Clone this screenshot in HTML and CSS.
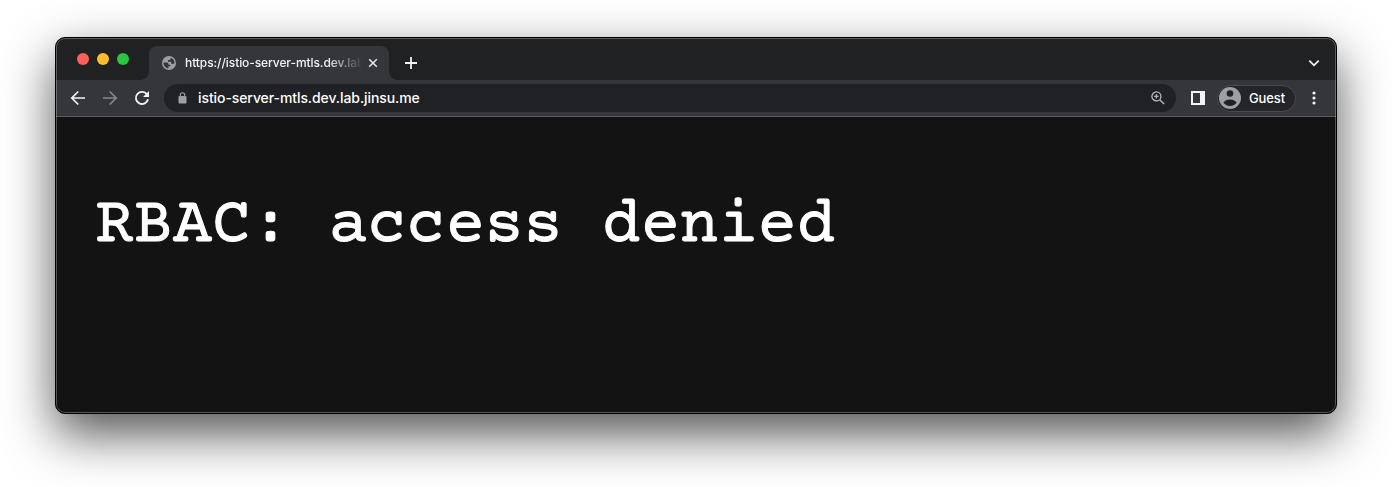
FILE: index.html
```
<!DOCTYPE html>
<html lang="en">
<head>
<meta charset="utf-8">
<title>istio-server-mtls.dev.lab.jinsu.me</title>
<link rel="stylesheet" href="styles.css">
</head>
<body>
<div class="window">
  <div class="tabstrip">
    <div class="lights"><i class="light red"></i><i class="light yellow"></i><i class="light green"></i></div>
    <div class="tab">
      <svg class="globe" viewBox="0 0 14 14"><circle cx="7" cy="7" r="7" fill="#9aa0a6"/><path d="M1.500 6.500h3.300c1 0 1.500.6 1.500 1.300 0 .7.500 1 1.200 1h.8v1.400H6.400v2.200C3.600 12.200 1.400 9.800 1.500 6.500zM8.600 1.700c2.400.7 4 2.900 3.900 5.400-.5.800-1.100 1-2 .9-.9-.1-1.300-.6-1.300-1.300 0-.6-.4-.9-1-.9H6V3.900h1.200c.9 0 1.400-.5 1.400-1.200z" fill="#35363a"/></svg>
      <span class="title">https://istio-server-mtls.dev.lab</span>
      <svg class="close" viewBox="0 0 10 10"><path d="M1.200 1.200 8.800 8.800M8.800 1.200 1.200 8.800" stroke="#e8eaed" stroke-width="1.500"/></svg>
    </div>
    <svg class="plus" viewBox="0 0 12 12"><path d="M6 0v12M0 6h12" stroke="#f1f3f4" stroke-width="1.800"/></svg>
    <svg class="chevron" viewBox="0 0 12 8"><path d="M1.300 1.700 6 6.300l4.700-4.600" fill="none" stroke="#f1f3f4" stroke-width="1.800"/></svg>
  </div>
  <div class="toolbar">
    <svg class="nav" viewBox="0 0 16 16"><path d="M15 8H2M8.300 1.500 1.800 8l6.500 6.500" fill="none" stroke="#f1f3f4" stroke-width="1.700"/></svg>
    <svg class="nav" viewBox="0 0 16 16"><path d="M1 8h13M7.700 1.500 14.200 8l-6.500 6.500" fill="none" stroke="#85868a" stroke-width="1.700"/></svg>
    <svg class="nav" viewBox="0 0 16 16"><path d="M13 4.400A6.100 6.100 0 1 0 14 9.200" fill="none" stroke="#f1f3f4" stroke-width="1.900"/><path d="M15 1v6H9z" fill="#f1f3f4"/></svg>
    <div class="omnibox">
      <svg class="lock" viewBox="0 0 9 12"><rect x=".5" y="4" width="8" height="7.500" rx="1" fill="#9aa0a6"/><path d="M2.300 4.500V3a2.200 2.200 0 0 1 4.400 0v1.500" fill="none" stroke="#9aa0a6" stroke-width="1.100"/></svg>
      <span class="url">istio-server-mtls.dev.lab.jinsu.me</span>
      <svg class="zoom" viewBox="0 0 14 14"><circle cx="5.400" cy="5.400" r="4.500" fill="none" stroke="#b4b7ba" stroke-width="1.300"/><path d="M8.700 8.700 13.100 13.100M5.400 3.200v4.400M3.200 5.400h4.400" stroke="#b4b7ba" stroke-width="1.400"/></svg>
    </div>
    <svg class="panel" viewBox="0 0 14 14"><path fill-rule="evenodd" d="M0 0h14v14H0zM2 2v10h7V2z" fill="#f1f3f4"/></svg>
    <div class="profile">
      <svg class="avatar" viewBox="0 0 22 22"><circle cx="11" cy="11" r="11" fill="#9aa0a6"/><circle cx="11" cy="6.500" r="3.300" fill="#202124"/><path d="M4.400 15.500c1.400-2.100 3.900-3.100 6.600-3.100s5.200 1 6.600 3.100c-1.500 2.200-3.900 3.500-6.600 3.500s-5.100-1.300-6.600-3.500z" fill="#202124"/></svg>
      <span class="guest">Guest</span>
    </div>
    <svg class="dots" viewBox="0 0 4 14"><circle cx="2" cy="2" r="1.600" fill="#f1f3f4"/><circle cx="2" cy="7" r="1.600" fill="#f1f3f4"/><circle cx="2" cy="12" r="1.600" fill="#f1f3f4"/></svg>
  </div>
  <div class="page"><pre class="message">RBAC: access denied</pre></div>
</div>
</body>
</html>
```
FILE: styles.css
```
* { box-sizing: border-box; }
body { margin: 0; height: 487px; overflow: hidden; background: #fff; padding: 37px 55px; font-family: Inter, "Liberation Sans", sans-serif; }
svg { display: block; flex: none; }
.window { position: relative; display: flex; flex-direction: column; width: 1282px; height: 377px; border: 1px solid #000; border-radius: 10px; overflow: hidden; background: #131313; box-shadow: 0 20px 50px rgba(0,0,0,.68); }
.window::after { content: ""; position: absolute; inset: 0; border: 1px solid rgba(255,255,255,.28); border-radius: 9px; pointer-events: none; }
.tabstrip { display: flex; height: 42px; background: #202123; }
.lights { display: flex; gap: 8px; padding: 15px 0 0 21px; width: 93px; }
.light { width: 12px; height: 12px; border-radius: 50%; }
.red { background: #ff5f57; }
.yellow { background: #febc2e; }
.green { background: #28c840; }
.tab { position: relative; display: flex; align-items: center; width: 240px; height: 34px; margin-top: 8px; padding-left: 13px; background: #35363a; border-radius: 8px 8px 0 0; }
.tab::before, .tab::after { content: ""; position: absolute; bottom: 0; width: 8px; height: 8px; }
.tab::before { left: -8px; background: radial-gradient(circle at 0 0, #202123 7.500px, #35363a 8px); }
.tab::after { right: -8px; background: radial-gradient(circle at 100% 0, #202123 7.500px, #35363a 8px); }
.globe { width: 14px; height: 14px; }
.title { width: 176px; margin-left: 9px; white-space: nowrap; font-size: 12px; line-height: 20px; font-weight: 450; color: #f1f3f4; letter-spacing: -.08px; -webkit-mask-image: linear-gradient(90deg, #000 142px, transparent 178px); mask-image: linear-gradient(90deg, #000 142px, transparent 178px); }
.close { width: 10px; height: 10px; margin-left: 7px; }
.plus { width: 12px; height: 12px; margin: 19px 0 0 16px; }
.chevron { width: 12px; height: 8px; margin: 21px 16px 0 auto; }
.toolbar { display: flex; align-items: center; height: 37px; padding: 0 14px; background: #35363a; border-bottom: 1px solid #5b5c60; }
.nav { width: 16px; height: 16px; margin-right: 16px; }
.omnibox { display: flex; align-items: center; width: 1012px; height: 28px; margin-left: -2px; padding: 0 11px 0 14px; border-radius: 14px; background: #202124; }
.lock { width: 9px; height: 12px; }
.url { margin-left: 11px; font-size: 14px; line-height: 20px; font-weight: 500; color: #fff; white-space: nowrap; letter-spacing: -.085px; }
.zoom { width: 14px; height: 14px; margin-left: auto; }
.panel { width: 14px; height: 14px; margin-left: 15px; }
.profile { display: flex; align-items: center; width: 79px; height: 27px; margin-left: 12px; padding-left: 1px; border: 1px solid #494a4e; border-radius: 14px; background: #242529; }
.avatar { width: 22px; height: 22px; }
.guest { margin-left: 8px; font-size: 13px; font-weight: 500; color: #fff; letter-spacing: -.1px; }
.dots { width: 4px; height: 14px; margin-left: 16px; }
.page { flex: 1; padding: 73px 0 0 39px; }
.message { margin: 0; font: 400 65px/74px "Courier Prime", "Nimbus Mono PS", FreeMono, "Liberation Mono", monospace; color: #fff; -webkit-text-stroke: 1px #fff; }
```
